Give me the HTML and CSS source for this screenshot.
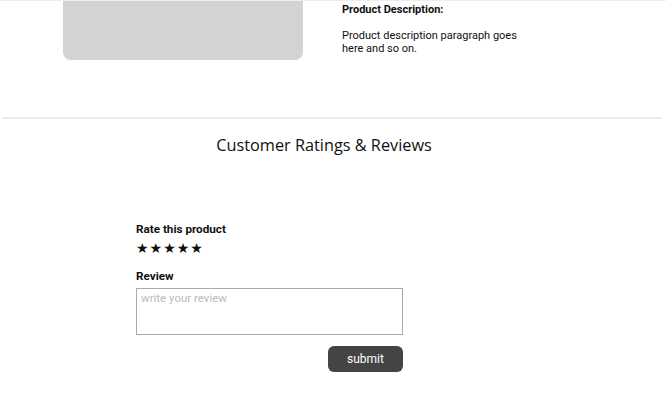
FILE: index.html
```html
<!DOCTYPE html>
<html>
<head>
<meta charset="utf-8">
<link rel="stylesheet" href="styles.css">
</head>
<body>
<div class="topline"></div>
<section class="product">
  <div class="image"></div>
  <div class="desc">
    <h3 class="desc-title">Product Description:</h3>
    <p class="desc-text">Product description paragraph goes<br>here and so on.</p>
  </div>
</section>
<hr class="divider">
<h2 class="reviews-title">Customer Ratings &amp; Reviews</h2>
<form class="review-form">
  <label class="label">Rate this product</label>
  <div class="stars"><span>★</span><span>★</span><span>★</span><span>★</span><span>★</span></div>
  <label class="label review-label">Review</label>
  <textarea class="review-input" placeholder="write your review"></textarea>
  <div class="actions"><button type="button" class="submit">submit</button></div>
</form>
</body>
</html>
```
FILE: styles.css
```css
html, body {
  margin: 0;
  padding: 0;
  background: #fff;
  font-family: Roboto, "Liberation Sans", sans-serif;
  color: #111;
}
.topline {
  height: 1px;
  background: #eeeeee;
}
.product {
  display: flex;
  gap: 39px;
  padding-left: 63px;
  height: 116px;
}
.image {
  width: 240px;
  height: 59px;
  background: #d3d3d3;
  border-radius: 0 0 8px 8px;
}
.desc {
  padding-top: 2px;
}
.desc-title {
  margin: 0;
  font-size: 11px;
  font-weight: 700;
  line-height: 14px;
}
.desc-text {
  margin: 12px 0 0;
  font-size: 11px;
  line-height: 13px;
}
.divider {
  margin: 0 4px 0 2px;
  border: 0;
  height: 2px;
  background: #ececec;
}
.reviews-title {
  margin: 14px 18px 0 0;
  text-align: center;
  font-family: "Open Sans", sans-serif;
  font-weight: 400;
  font-size: 16.3px;
  line-height: 24px;
  color: #111;
}
.review-form {
  width: 267px;
  margin: 65px 0 0 136px;
  display: flex;
  flex-direction: column;
}
.label {
  font-size: 11.7px;
  font-weight: 700;
  line-height: 14px;
}
.stars {
  display: flex;
  gap: 1px;
  margin-top: 4px;
  font-family: "DejaVu Sans", sans-serif;
  font-size: 14px;
  line-height: 16px;
}
.review-label {
  margin-top: 13px;
}
.review-input {
  margin-top: 5px;
  box-sizing: border-box;
  width: 267px;
  height: 47px;
  border: 1px solid #aaa;
  padding: 2px 4px;
  font-family: Roboto, sans-serif;
  font-size: 11.5px;
  resize: none;
}
.review-input::placeholder {
  color: #bbb;
}
.actions {
  display: flex;
  justify-content: flex-end;
  margin-top: 11px;
}
.submit {
  width: 75px;
  height: 26px;
  border: 0;
  border-radius: 6px;
  background: #444;
  color: #fff;
  font-family: Roboto, sans-serif;
  font-size: 12px;
}
```
